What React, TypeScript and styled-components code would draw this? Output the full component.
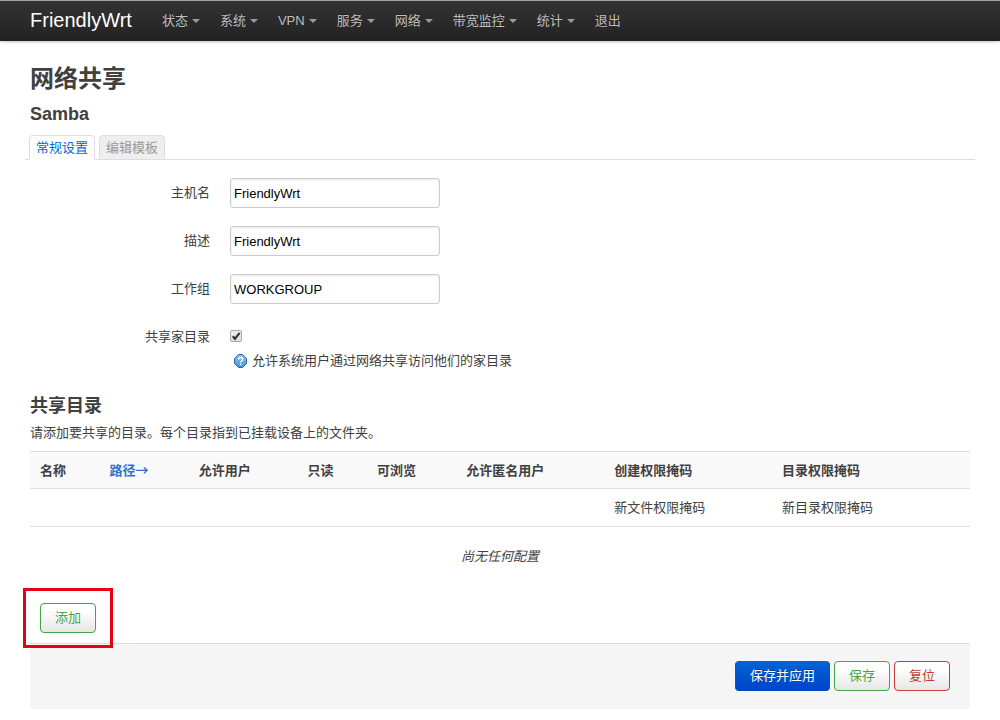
import React from "react";
import styled, { createGlobalStyle, css } from "styled-components";

const GlobalStyle = createGlobalStyle`
  *, *::before, *::after { box-sizing: border-box; }
  body {
    margin: 0;
    background: #fff;
    color: #404040;
    font: 13px/18px "Liberation Sans", "Noto Sans CJK SC", sans-serif;
  }
  h2, h3, p { margin: 0; }
  button, input { font: inherit; }
`;

const TopBar = styled.header`
  display: flex;
  align-items: center;
  height: 41px;
  padding: 0 30px;
  border-top: 1px solid #a0a0a0;
  background: linear-gradient(#333, #222);
  box-shadow: 0 1px 3px rgba(0, 0, 0, 0.25);
`;

const Brand = styled.a`
  margin-right: 20px;
  color: #fff;
  font-size: 20px;
  line-height: 20px;
  padding-bottom: 2px;
  text-decoration: none;
`;

const Menu = styled.nav`
  display: flex;
`;

const MenuLink = styled.a<{ $dropdown?: boolean }>`
  display: flex;
  align-items: center;
  gap: 4px;
  padding: 0 10px;
  color: #bfbfbf;
  text-decoration: none;
  white-space: nowrap;
  text-shadow: 0 -1px 0 rgba(0, 0, 0, 0.25);

  ${(p) =>
    p.$dropdown &&
    css`
      &::after {
        content: "";
        border: 4px solid transparent;
        border-top-color: #999;
        border-bottom: 0;
      }
    `}
`;

const Page = styled.main`
  padding: 20px 30px 12px;
`;

const PageTitle = styled.h2`
  font-size: 24px;
  line-height: 35px;
`;

const SectionTitle = styled.h3`
  font-size: 18px;
  line-height: 36px;
`;

const Tabs = styled.div`
  display: flex;
  gap: 4px;
  margin: 3px -5px 18px;
  padding-left: 4px;
  border-bottom: 1px solid #ddd;
`;

const Tab = styled.a<{ $active?: boolean }>`
  margin-bottom: -1px;
  padding: 3px 6px 2px;
  border: 1px solid #ddd;
  border-bottom-color: ${(p) => (p.$active ? "#fff" : "#ddd")};
  border-radius: 4px 4px 0 0;
  background: ${(p) => (p.$active ? "#fff" : "#eee")};
  color: ${(p) => (p.$active ? "#0069d6" : "#999")};
  text-decoration: none;
`;

const Field = styled.div`
  display: flex;
  gap: 20px;
  margin-bottom: 18px;
`;

const FieldLabel = styled.label`
  width: 180px;
  padding-top: 6px;
  text-align: right;
`;

const TextInput = styled.input`
  width: 210px;
  height: 30px;
  padding: 4px 3px;
  border: 1px solid #ccc;
  border-radius: 3px;
  background: #fff;
  color: #000;
  box-shadow: inset 0 1px 3px rgba(0, 0, 0, 0.1);
`;

const CheckColumn = styled.div`
  padding-top: 8px;
`;

const CheckBox = styled.span`
  position: relative;
  display: block;
  width: 13px;
  height: 13px;

  input {
    appearance: none;
    display: block;
    width: 12px;
    height: 12px;
    margin: 0;
    border: 1px solid #aaa;
    border-radius: 2px;
    background: linear-gradient(#eee, #ddd);
  }
  svg {
    position: absolute;
    inset: 0;
    pointer-events: none;
    visibility: hidden;
  }
  input:checked + svg {
    visibility: visible;
  }
`;

const Hint = styled.p`
  display: flex;
  align-items: center;
  gap: 4px;
  padding: 9px 4px 0;
`;

const Intro = styled.p`
  margin-bottom: 9px;
`;

const ShareTable = styled.table`
  width: 100%;
  border-collapse: separate;
  border-spacing: 0;
  text-align: left;

  th, td {
    height: 38px;
    padding: 9px 10px;
    border-top: 1px solid #ddd;
    white-space: nowrap;
  }
  th {
    height: 37px;
    padding-bottom: 8px;
    background: #f9f9f9;
  }
`;

const SortLink = styled.a`
  color: #3074cf;
  font-family: "Noto Sans CJK SC", sans-serif;
  text-decoration: none;
`;

const Empty = styled.td`
  && {
    height: 60px;
    text-align: center;
    font-style: italic;
  }
`;

const tones = {
  add: css`
    border-color: #46a546;
    color: #46a546;
    background: linear-gradient(#fff, #fff 25%, #e6e6e6);
  `,
  reset: css`
    border-color: #c43c35;
    color: #c43c35;
    background: linear-gradient(#fff, #fff 25%, #e6e6e6);
  `,
  apply: css`
    border-color: #0064cd #0058d0 #0048c8;
    color: #fff;
    text-shadow: 0 -1px 0 rgba(0, 0, 0, 0.25);
    background: linear-gradient(#0064d2, #0044cc);
  `,
};

const Button = styled.button<{ $tone: keyof typeof tones }>`
  height: 30px;
  padding: 0 14px;
  border: 1px solid;
  border-radius: 4px;
  line-height: 18px;
  white-space: nowrap;
  ${(p) => tones[p.$tone]}
`;

const AddRow = styled.div`
  padding: 17px 10px 10px;
`;

const Highlight = styled.span`
  position: relative;
  display: inline-block;
  vertical-align: top;

  &::after {
    content: "";
    position: absolute;
    inset: -15px -17px;
    border: 3px solid #e60012;
    pointer-events: none;
  }
`;

const Actions = styled.footer`
  display: flex;
  justify-content: flex-end;
  gap: 4px;
  padding: 17px 20px 18px;
  border-top: 1px solid #ddd;
  border-radius: 0 0 3px 3px;
  background: #f5f5f5;
`;

const menu = [
  { label: "状态", dropdown: true },
  { label: "系统", dropdown: true },
  { label: "VPN", dropdown: true },
  { label: "服务", dropdown: true },
  { label: "网络", dropdown: true },
  { label: "带宽监控", dropdown: true },
  { label: "统计", dropdown: true },
  { label: "退出", dropdown: false },
];

const textFields = [
  { id: "hostname", label: "主机名", value: "FriendlyWrt" },
  { id: "description", label: "描述", value: "FriendlyWrt" },
  { id: "workgroup", label: "工作组", value: "WORKGROUP" },
];

const HelpIcon = () => (
  <svg width="14" height="14" viewBox="0 0 14 14" aria-hidden="true">
    <defs>
      <linearGradient id="help" x1="0" y1="0" x2="0" y2="1">
        <stop offset="0" stopColor="#8cc4ee" />
        <stop offset="1" stopColor="#3f97dc" />
      </linearGradient>
    </defs>
    <path
      d="M4.5 .5h4L12.500 4.500v5L8.500 13.500h-4L.5 9.500v-5z"
      fill="url(#help)"
      stroke="#2f64a0"
      strokeLinejoin="round"
    />
    <path d="M4.800 5.400c0-2.400 3.900-2.400 3.900 0 0 1.400-2 1.300-2 2.900" fill="none" stroke="#fff" strokeWidth="1.500" />
    <rect x="6" y="9.500" width="1.500" height="1.500" fill="#fff" />
  </svg>
);

export default function App() {
  return (
    <>
      <GlobalStyle />
      <TopBar>
        <Brand href="#">FriendlyWrt</Brand>
        <Menu>
          {menu.map((m) => (
            <MenuLink key={m.label} href="#" $dropdown={m.dropdown}>
              {m.label}
            </MenuLink>
          ))}
        </Menu>
      </TopBar>
      <Page>
        <PageTitle>网络共享</PageTitle>
        <SectionTitle>Samba</SectionTitle>
        <Tabs>
          <Tab href="#" $active>常规设置</Tab>
          <Tab href="#">编辑模板</Tab>
        </Tabs>
        {textFields.map((f) => (
          <Field key={f.id}>
            <FieldLabel htmlFor={f.id}>{f.label}</FieldLabel>
            <TextInput id={f.id} type="text" defaultValue={f.value} />
          </Field>
        ))}
        <Field>
          <FieldLabel htmlFor="homes">共享家目录</FieldLabel>
          <CheckColumn>
            <CheckBox>
              <input id="homes" type="checkbox" defaultChecked />
              <svg width="13" height="13" viewBox="0 0 13 13" aria-hidden="true">
                <path d="M2.800 6.200L5 8.800L9.600 2.800" fill="none" stroke="#333" strokeWidth="2.200" />
              </svg>
            </CheckBox>
            <Hint>
              <HelpIcon />
              允许系统用户通过网络共享访问他们的家目录
            </Hint>
          </CheckColumn>
        </Field>
        <SectionTitle>共享目录</SectionTitle>
        <Intro>请添加要共享的目录。每个目录指到已挂载设备上的文件夹。</Intro>
        <ShareTable>
          <thead>
            <tr>
              <th>名称</th>
              <th><SortLink href="#">路径→</SortLink></th>
              <th>允许用户</th>
              <th>只读</th>
              <th>可浏览</th>
              <th>允许匿名用户</th>
              <th>创建权限掩码</th>
              <th>目录权限掩码</th>
              <th />
            </tr>
          </thead>
          <tbody>
            <tr>
              <td colSpan={6} />
              <td>新文件权限掩码</td>
              <td>新目录权限掩码</td>
              <td />
            </tr>
            <tr>
              <Empty colSpan={9}>尚无任何配置</Empty>
            </tr>
          </tbody>
        </ShareTable>
        <AddRow>
          <Highlight>
            <Button type="button" $tone="add">添加</Button>
          </Highlight>
        </AddRow>
        <Actions>
          <Button type="button" $tone="apply">保存并应用</Button>
          <Button type="button" $tone="add">保存</Button>
          <Button type="button" $tone="reset">复位</Button>
        </Actions>
      </Page>
    </>
  );
}
